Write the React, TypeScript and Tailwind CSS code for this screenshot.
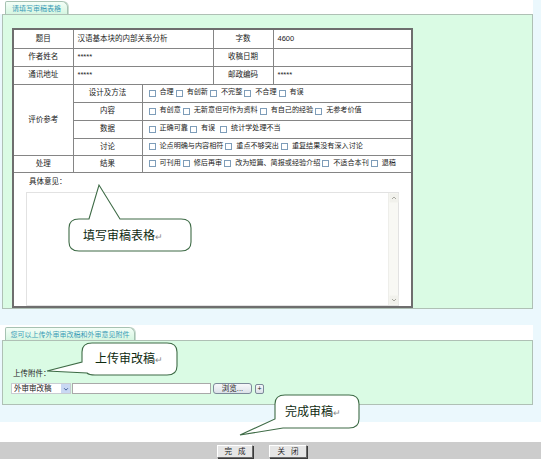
import React from "react";

const cell = "border border-[#858585]";

function Box() {
  return <span className="mr-[4px] inline-block h-[7px] w-[7px] shrink-0 border border-[#7E9DB9] bg-white" />;
}

function Opts({ items }: { items: string[] }) {
  return (
    <div className="flex items-center whitespace-nowrap text-[7.1px]">
      {items.map((t, i) => (
        <span key={i} className={`mr-[2px] flex items-center ${t === "统计学处理不当" ? "ml-[3px]" : ""}`}>
          <Box />
          {t}
        </span>
      ))}
    </div>
  );
}

function Tab({ label, w }: { label: string; w: string }) {
  return (
    <div
      className={`${w} flex h-full items-center justify-center rounded-tl-[2px] rounded-tr-[6px] border border-b-0 border-[#A6C2B2] bg-gradient-to-b from-[#F4FEF7] to-[#D6F6E1] text-[7px] text-[#3A9CB6] shadow-[1px_0_0_#C9DCD0]`}
    >
      {label}
    </div>
  );
}

function BarButton({ a, b, w }: { a: string; b: string; w: string }) {
  return (
    <div
      className={`${w} flex h-[13px] items-center justify-center gap-[6px] border border-t-white border-l-white border-b-[#6A6A6A] border-r-[#6A6A6A] bg-[#E6E6E6] shadow-[1px_1px_0_#3A3A3A]`}
    >
      <span>{a}</span>
      <span>{b}</span>
    </div>
  );
}

export default function App() {
  return (
    <div className="relative h-[465px] w-[541px] overflow-hidden bg-white font-['Liberation_Sans','Noto_Sans_CJK_SC',sans-serif] text-[7.5px] leading-none text-[#222]">
      <div className="bg-[#EBF8FD] pb-[17px] pr-[8px]">
        <div className="h-[14px] bg-white pl-[5px] pt-[1px]">
          <Tab label="请填写审稿表格" w="w-[63px]" />
        </div>
        <div className="ml-[2px] border border-[#AFC0B5] bg-[#DAFBE4] pl-[9px] pt-[13px]">
          <table className="w-[399px] table-fixed border-collapse border-2 border-[#6E6E6E] bg-white">
            <colgroup>
              <col className="w-[60px]" />
              <col className="w-[69px]" />
              <col className="w-[71px]" />
              <col className="w-[60px]" />
              <col className="w-[139px]" />
            </colgroup>
            <tbody>
              <tr className="h-[19px]">
                <td className={`${cell} text-center`}>题目</td>
                <td colSpan={2} className={`${cell} pl-[4px]`}>汉语基本块的内部关系分析</td>
                <td className={`${cell} text-center`}>字数</td>
                <td className={`${cell} pl-[4px]`}>4600</td>
              </tr>
              <tr className="h-[18px]">
                <td className={`${cell} text-center`}>作者姓名</td>
                <td colSpan={2} className={`${cell} pl-[4px]`}>*****</td>
                <td className={`${cell} text-center`}>收稿日期</td>
                <td className={cell}></td>
              </tr>
              <tr className="h-[18px]">
                <td className={`${cell} text-center`}>通讯地址</td>
                <td colSpan={2} className={`${cell} pl-[4px]`}>*****</td>
                <td className={`${cell} text-center`}>邮政编码</td>
                <td className={`${cell} pl-[4px]`}>*****</td>
              </tr>
              <tr className="h-[18px]">
                <td rowSpan={4} className={`${cell} text-center`}>评价参考</td>
                <td className={`${cell} text-center`}>设计及方法</td>
                <td colSpan={3} className={`${cell} pl-[6px]`}>
                  <Opts items={["合理", "有创新", "不完整", "不合理", "有误"]} />
                </td>
              </tr>
              <tr className="h-[18px]">
                <td className={`${cell} text-center`}>内容</td>
                <td colSpan={3} className={`${cell} pl-[6px]`}>
                  <Opts items={["有创意", "无新意但可作为资料", "有自己的经验", "无参考价值"]} />
                </td>
              </tr>
              <tr className="h-[18px]">
                <td className={`${cell} text-center`}>数据</td>
                <td colSpan={3} className={`${cell} pl-[6px]`}>
                  <Opts items={["正确可靠", "有误", "统计学处理不当"]} />
                </td>
              </tr>
              <tr className="h-[17px]">
                <td className={`${cell} text-center`}>讨论</td>
                <td colSpan={3} className={`${cell} pl-[6px]`}>
                  <Opts items={["论点明确与内容相符", "重点不够突出", "重复结果没有深入讨论"]} />
                </td>
              </tr>
              <tr className="h-[17px]">
                <td className={`${cell} text-center`}>处理</td>
                <td className={`${cell} text-center`}>结果</td>
                <td colSpan={3} className={`${cell} pl-[6px]`}>
                  <Opts items={["可刊用", "修后再审", "改为短篇、简报或经验介绍", "不适合本刊", "退稿"]} />
                </td>
              </tr>
              <tr className="h-[134px]">
                <td colSpan={5} className={`${cell} align-top`}>
                  <div className="pl-[15px] pt-[5px]">具体意见：</div>
                  <div className="ml-[12px] mt-[7px] flex h-[114px] w-[373px] border border-[#E2E2E2] bg-white">
                    <div className="flex-1" />
                    <div className="flex w-[10px] flex-col justify-between border-l border-[#EEEEEA] bg-[#F8F8F4]">
                      <svg viewBox="0 0 10 10" className="h-[10px] w-[10px]">
                        <rect x="0.5" y="0.5" width="9" height="9" fill="#F1F1EC" />
                        <path d="M3 6 L5 4 L7 6" stroke="#A8A8A0" strokeWidth="1" fill="none" />
                      </svg>
                      <svg viewBox="0 0 10 10" className="h-[10px] w-[10px]">
                        <rect x="0.5" y="0.5" width="9" height="9" fill="#F1F1EC" />
                        <path d="M3 4 L5 6 L7 4" stroke="#A8A8A0" strokeWidth="1" fill="none" />
                      </svg>
                    </div>
                  </div>
                </td>
              </tr>
            </tbody>
          </table>
        </div>

        <div className="h-[16px]" />
        <div className="h-[15px] bg-white pl-[5px] pt-[2px]">
          <Tab label="您可以上传外审审改稿和外审意见附件" w="w-[130px]" />
        </div>
        <div className="ml-[2px] h-[65px] border border-[#AFC0B5] bg-[#DAFBE4] pl-[8px] pt-[29px]">
          <div className="ml-[2px] h-[10px]">上传附件：</div>
          <div className="mt-[3px] flex items-center">
            <div className="flex h-[11px] w-[60px] items-center border border-[#C8CCD2] bg-white">
              <span className="flex-1 pl-[2px] text-[7.5px]">外审审改稿</span>
              <span className="flex h-full w-[9px] items-center justify-center bg-[#C9D8F3]">
                <svg viewBox="0 0 8 8" className="h-[6px] w-[6px]">
                  <path d="M1.5 3 L4 5.5 L6.5 3" stroke="#3C5A96" strokeWidth="1.3" fill="none" />
                </svg>
              </span>
            </div>
            <div className="ml-[1px] h-[11px] w-[139px] border border-[#A9A9A9] bg-white" />
            <div className="ml-[2px] flex h-[11px] w-[39px] items-center justify-center rounded-[3px] border border-[#7C8A99] bg-gradient-to-b from-[#F7F8FA] to-[#DCE2E9]">
              浏览...
            </div>
            <div className="ml-[3px] flex h-[10px] w-[9px] items-center justify-center rounded-[2px] border border-[#7C8A99] bg-gradient-to-b from-[#F7F8FA] to-[#DCE2E9] text-[7px]">
              +
            </div>
          </div>
        </div>
      </div>
      <div className="h-[20px] bg-white" />
      <div className="flex h-[17px] items-start bg-[#CCCCCC] pt-[3px]">
        <div className="ml-[217px]">
          <BarButton a="完" b="成" w="w-[36px]" />
        </div>
        <div className="ml-[16px]">
          <BarButton a="关" b="闭" w="w-[38px]" />
        </div>
      </div>

      <svg className="pointer-events-none absolute left-0 top-0 h-[465px] w-[541px]" viewBox="0 0 541 465">
        <g fill="white" stroke="#3E6B46" strokeWidth="1.1">
          <path d="M79 219 L89 219 L99 185 L120 219 L181 219 Q191 219 191 228 L191 242 Q191 251 181 251 L79 251 Q69 251 69 242 L69 228 Q69 219 79 219 Z" />
          <path d="M92 343 L167 343 Q177 343 177 352 L177 366 Q177 375 167 375 L95 375 Q89 375 87 373 L47 371 L82 362 L82 352 Q82 343 92 343 Z" />
          <path d="M285 395 L349 395 Q359 395 359 404 L359 419 Q359 428 349 428 L283 428 L240 435 L275 419 L275 404 Q275 395 285 395 Z" />
        </g>
      </svg>
      <div className="absolute left-[83px] top-[228px] flex items-end font-['Noto_Sans_CJK_SC',sans-serif] text-[12px] leading-[14px] text-[#0E2A10]">
        填写审稿表格<span className="text-[9px] leading-[11px] text-[#8A8A8A]">↵</span>
      </div>
      <div className="absolute left-[95px] top-[351px] flex items-end font-['Noto_Sans_CJK_SC',sans-serif] text-[12px] leading-[14px] text-[#0E2A10]">
        上传审改稿<span className="text-[9px] leading-[11px] text-[#8A8A8A]">↵</span>
      </div>
      <div className="absolute left-[285px] top-[404px] flex items-end font-['Noto_Sans_CJK_SC',sans-serif] text-[12px] leading-[14px] text-[#0E2A10]">
        完成审稿<span className="text-[9px] leading-[11px] text-[#8A8A8A]">↵</span>
      </div>
    </div>
  );
}
